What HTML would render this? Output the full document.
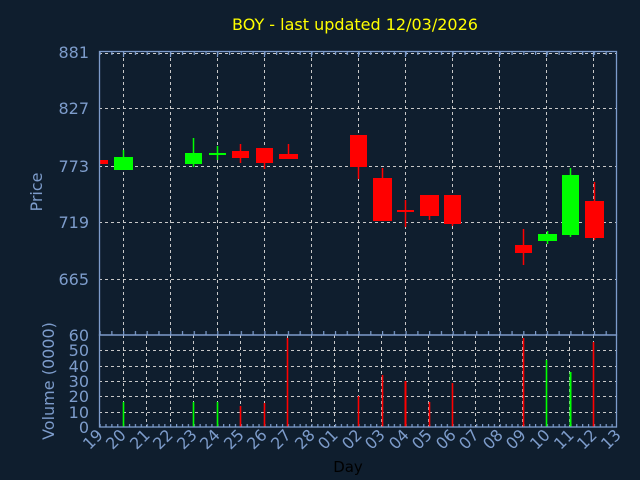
<!DOCTYPE html>
<html><head><style>
html,body{margin:0;padding:0;background:#0f1e2e;}
svg{display:block;font-family:"DejaVu Sans","Liberation Sans",sans-serif;}
</style></head><body>
<svg width="640" height="480" viewBox="0 0 640 480" xmlns="http://www.w3.org/2000/svg">
<defs>
<pattern id="tk" x="99.5" y="0" width="11.77" height="480" patternUnits="userSpaceOnUse">
<rect x="0" y="0" width="1.2" height="480" fill="#7d9ccb"/>
</pattern>
<pattern id="tk2" x="99.5" y="0" width="5.885" height="480" patternUnits="userSpaceOnUse">
<rect x="0" y="0" width="1.2" height="480" fill="#7d9ccb"/>
</pattern>
</defs>
<rect width="640" height="480" fill="#0f1e2e"/>
<text x="355" y="30" fill="#ffff00" font-size="16" text-anchor="middle">BOY - last updated 12/03/2026</text>
<g stroke="#c8c8c8" stroke-width="1" stroke-dasharray="3,3">
<line x1="99" y1="53.5" x2="617" y2="53.5"/>
<line x1="99" y1="108.5" x2="617" y2="108.5"/>
<line x1="99" y1="166.5" x2="617" y2="166.5"/>
<line x1="99" y1="222.5" x2="617" y2="222.5"/>
<line x1="99" y1="279.5" x2="617" y2="279.5"/>
<line x1="123.5" y1="52" x2="123.5" y2="335"/>
<line x1="170.5" y1="52" x2="170.5" y2="335"/>
<line x1="217.5" y1="52" x2="217.5" y2="335"/>
<line x1="264.5" y1="52" x2="264.5" y2="335"/>
<line x1="311.5" y1="52" x2="311.5" y2="335"/>
<line x1="358.5" y1="52" x2="358.5" y2="335"/>
<line x1="405.5" y1="52" x2="405.5" y2="335"/>
<line x1="452.5" y1="52" x2="452.5" y2="335"/>
<line x1="499.5" y1="52" x2="499.5" y2="335"/>
<line x1="546.5" y1="52" x2="546.5" y2="335"/>
<line x1="593.5" y1="52" x2="593.5" y2="335"/>
<line x1="99" y1="350.5" x2="617" y2="350.5"/>
<line x1="99" y1="366.5" x2="617" y2="366.5"/>
<line x1="99" y1="381.5" x2="617" y2="381.5"/>
<line x1="99" y1="396.5" x2="617" y2="396.5"/>
<line x1="99" y1="412.5" x2="617" y2="412.5"/>
<line x1="123.5" y1="335" x2="123.5" y2="427"/><line x1="146.5" y1="335" x2="146.5" y2="427"/>
<line x1="170.5" y1="335" x2="170.5" y2="427"/><line x1="193.5" y1="335" x2="193.5" y2="427"/>
<line x1="217.5" y1="335" x2="217.5" y2="427"/><line x1="240.5" y1="335" x2="240.5" y2="427"/>
<line x1="264.5" y1="335" x2="264.5" y2="427"/><line x1="287.5" y1="335" x2="287.5" y2="427"/>
<line x1="311.5" y1="335" x2="311.5" y2="427"/><line x1="334.5" y1="335" x2="334.5" y2="427"/>
<line x1="358.5" y1="335" x2="358.5" y2="427"/><line x1="381.5" y1="335" x2="381.5" y2="427"/>
<line x1="405.5" y1="335" x2="405.5" y2="427"/><line x1="428.5" y1="335" x2="428.5" y2="427"/>
<line x1="452.5" y1="335" x2="452.5" y2="427"/><line x1="475.5" y1="335" x2="475.5" y2="427"/>
<line x1="499.5" y1="335" x2="499.5" y2="427"/><line x1="522.5" y1="335" x2="522.5" y2="427"/>
<line x1="546.5" y1="335" x2="546.5" y2="427"/><line x1="569.5" y1="335" x2="569.5" y2="427"/>
<line x1="593.5" y1="335" x2="593.5" y2="427"/>
</g>
<!-- ticks -->
<rect x="99" y="52" width="518" height="3" fill="url(#tk)"/>
<rect x="99" y="331" width="518" height="4" fill="url(#tk)"/>
<rect x="99" y="424" width="518" height="3" fill="url(#tk2)"/>
<g stroke="#7d9ccb" stroke-width="1.2">
<line x1="123.5" y1="52" x2="123.5" y2="57"/><line x1="170.5" y1="52" x2="170.5" y2="57"/>
<line x1="217.5" y1="52" x2="217.5" y2="57"/><line x1="264.5" y1="52" x2="264.5" y2="57"/>
<line x1="311.5" y1="52" x2="311.5" y2="57"/><line x1="358.5" y1="52" x2="358.5" y2="57"/>
<line x1="405.5" y1="52" x2="405.5" y2="57"/><line x1="452.5" y1="52" x2="452.5" y2="57"/>
<line x1="499.5" y1="52" x2="499.5" y2="57"/><line x1="546.5" y1="52" x2="546.5" y2="57"/>
<line x1="593.5" y1="52" x2="593.5" y2="57"/>
</g>
<!-- candles -->
<g stroke-width="1.5">
<rect x="99" y="160" width="9" height="4" fill="#ff0000"/>
<line x1="123.5" y1="150" x2="123.5" y2="158" stroke="#00ff00"/><rect x="114" y="157" width="19" height="13" fill="#00ff00"/>
<line x1="193.5" y1="138" x2="193.5" y2="167" stroke="#00ff00"/><rect x="185" y="153" width="17" height="11" fill="#00ff00"/>
<line x1="217.5" y1="146" x2="217.5" y2="160" stroke="#00ff00"/><rect x="209" y="153" width="17" height="2" fill="#00ff00"/>
<line x1="240.5" y1="144" x2="240.5" y2="163" stroke="#ff0000"/><rect x="232" y="151" width="17" height="7" fill="#ff0000"/>
<line x1="264.5" y1="148" x2="264.5" y2="169" stroke="#ff0000"/><rect x="256" y="148" width="17" height="15" fill="#ff0000"/>
<line x1="288.5" y1="144" x2="288.5" y2="159" stroke="#ff0000"/><rect x="279" y="154" width="19" height="5" fill="#ff0000"/>
<line x1="358.5" y1="135" x2="358.5" y2="179" stroke="#ff0000"/><rect x="350" y="135" width="17" height="32" fill="#ff0000"/>
<line x1="382.5" y1="168" x2="382.5" y2="221" stroke="#ff0000"/><rect x="373" y="178" width="19" height="43" fill="#ff0000"/>
<line x1="405.5" y1="200" x2="405.5" y2="227" stroke="#ff0000"/><rect x="397" y="210" width="17" height="2" fill="#ff0000"/>
<line x1="429.5" y1="195" x2="429.5" y2="220" stroke="#ff0000"/><rect x="420" y="195" width="19" height="21" fill="#ff0000"/>
<line x1="452.5" y1="195" x2="452.5" y2="226" stroke="#ff0000"/><rect x="444" y="195" width="17" height="29" fill="#ff0000"/>
<line x1="523.5" y1="229" x2="523.5" y2="265" stroke="#ff0000"/><rect x="515" y="245" width="17" height="8" fill="#ff0000"/>
<line x1="547.5" y1="231" x2="547.5" y2="244" stroke="#00ff00"/><rect x="538" y="234" width="19" height="7" fill="#00ff00"/>
<line x1="570.5" y1="168" x2="570.5" y2="237" stroke="#00ff00"/><rect x="562" y="175" width="17" height="60" fill="#00ff00"/>
<line x1="594.5" y1="182" x2="594.5" y2="240" stroke="#ff0000"/><rect x="585" y="201" width="19" height="37" fill="#ff0000"/>
</g>
<!-- volume bars -->
<g stroke-width="1.6">
<line x1="123.5" y1="402" x2="123.5" y2="427" stroke="#00ff00"/>
<line x1="193.5" y1="402" x2="193.5" y2="427" stroke="#00ff00"/>
<line x1="217.5" y1="402" x2="217.5" y2="427" stroke="#00ff00"/>
<line x1="240.5" y1="406" x2="240.5" y2="427" stroke="#ff0000"/>
<line x1="264.5" y1="403" x2="264.5" y2="427" stroke="#ff0000"/>
<line x1="287.5" y1="338" x2="287.5" y2="427" stroke="#ff0000"/>
<line x1="358.5" y1="396" x2="358.5" y2="427" stroke="#ff0000"/>
<line x1="382.5" y1="375" x2="382.5" y2="427" stroke="#ff0000"/>
<line x1="405.5" y1="381" x2="405.5" y2="427" stroke="#ff0000" stroke-width="2"/>
<line x1="429.5" y1="402" x2="429.5" y2="427" stroke="#ff0000"/>
<line x1="452.5" y1="383" x2="452.5" y2="427" stroke="#ff0000"/>
<line x1="523.5" y1="338" x2="523.5" y2="427" stroke="#ff0000"/>
<line x1="546.5" y1="360" x2="546.5" y2="427" stroke="#00ff00"/>
<line x1="570.5" y1="372" x2="570.5" y2="427" stroke="#00ff00" stroke-width="2"/>
<line x1="593.5" y1="342" x2="593.5" y2="427" stroke="#ff0000"/>
</g>
<!-- frames -->
<g fill="none" stroke="#7d9ccb" stroke-width="1.3">
<rect x="99.5" y="51.5" width="517" height="283.5"/>
<rect x="99.5" y="335" width="517" height="92"/>
</g>
<g fill="#7d9ccb" font-size="16" text-anchor="end">
<text x="89" y="58">881</text>
<text x="89" y="114">827</text>
<text x="89" y="172">773</text>
<text x="89" y="228">719</text>
<text x="89" y="285">665</text>
<text x="89" y="341">60</text>
<text x="89" y="356">50</text>
<text x="89" y="372">40</text>
<text x="89" y="387">30</text>
<text x="89" y="402">20</text>
<text x="89" y="418">10</text>
<text x="89" y="433">0</text>
</g>
<text transform="translate(42,192) rotate(-90)" fill="#7d9ccb" font-size="16" text-anchor="middle">Price</text>
<text transform="translate(54,381) rotate(-90)" fill="#7d9ccb" font-size="16" text-anchor="middle">Volume (0000)</text>
<g fill="#7d9ccb" font-size="16" text-anchor="end">
<text transform="translate(104,436) rotate(-45)">19</text>
<text transform="translate(127,436) rotate(-45)">20</text>
<text transform="translate(151,436) rotate(-45)">21</text>
<text transform="translate(174,436) rotate(-45)">22</text>
<text transform="translate(198,436) rotate(-45)">23</text>
<text transform="translate(221,436) rotate(-45)">24</text>
<text transform="translate(245,436) rotate(-45)">25</text>
<text transform="translate(268,436) rotate(-45)">26</text>
<text transform="translate(292,436) rotate(-45)">27</text>
<text transform="translate(316,436) rotate(-45)">28</text>
<text transform="translate(339,436) rotate(-45)">01</text>
<text transform="translate(363,436) rotate(-45)">02</text>
<text transform="translate(386,436) rotate(-45)">03</text>
<text transform="translate(410,436) rotate(-45)">04</text>
<text transform="translate(433,436) rotate(-45)">05</text>
<text transform="translate(457,436) rotate(-45)">06</text>
<text transform="translate(480,436) rotate(-45)">07</text>
<text transform="translate(504,436) rotate(-45)">08</text>
<text transform="translate(527,436) rotate(-45)">09</text>
<text transform="translate(551,436) rotate(-45)">10</text>
<text transform="translate(575,436) rotate(-45)">11</text>
<text transform="translate(598,436) rotate(-45)">12</text>
<text transform="translate(622,436) rotate(-45)">13</text>
</g>
<text x="348" y="472" fill="#000000" font-size="15" text-anchor="middle">Day</text>
</svg>
</body></html>
